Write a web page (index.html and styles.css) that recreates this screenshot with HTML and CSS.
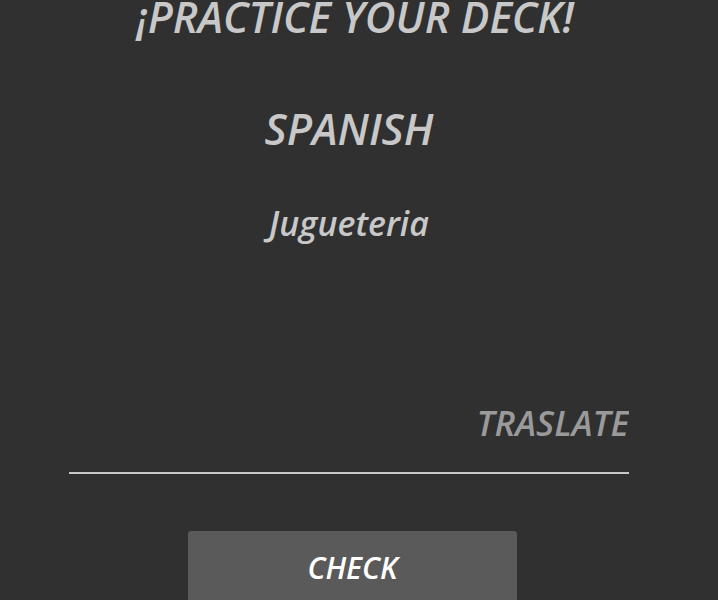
FILE: index.html
```html
<!DOCTYPE html>
<html lang="en">
<head>
<meta charset="utf-8">
<title>Practice your deck</title>
<link rel="stylesheet" href="styles.css">
</head>
<body>
<main class="practice">
  <h1 class="title">¡PRACTICE YOUR DECK!</h1>
  <h2 class="language">SPANISH</h2>
  <p class="word">Jugueteria</p>
  <form class="answer">
    <input class="answer-input" type="text" placeholder="TRASLATE">
    <button class="check" type="button">CHECK</button>
  </form>
</main>
</body>
</html>
```

FILE: styles.css
```css
html, body {
  margin: 0;
  height: 100%;
  background: #303030;
  overflow: hidden;
}
.practice {
  display: flex;
  flex-direction: column;
  align-items: center;
  padding-right: 20px;
  font-family: "Open Sans", "Liberation Sans", sans-serif;
  font-style: italic;
  font-weight: 600;
  color: #c8c8c8;
}
.title {
  margin: 0;
  font-size: 42.5px;
  font-weight: 600;
  line-height: 34px;
  padding-left: 12px;
}
.language {
  margin: 73px 0 0;
  font-size: 43px;
  font-weight: 600;
  line-height: 43px;
}
.word {
  margin: 56px 0 0;
  font-size: 34px;
  line-height: 34px;
}
.answer {
  display: flex;
  flex-direction: column;
  align-items: center;
  width: 560px;
  margin-top: 159px;
}
.answer-input {
  width: 100%;
  box-sizing: border-box;
  background: transparent;
  border: none;
  border-bottom: 2px solid #c8c8c8;
  padding: 0 0 26px;
  margin: 0;
  font-family: inherit;
  font-style: italic;
  font-weight: 600;
  font-size: 35px;
  line-height: normal;
  color: #c8c8c8;
  text-align: right;
  outline: none;
}
.answer-input::placeholder {
  color: #9a9a9a;
}
.check {
  margin-top: 57px;
  margin-left: 7px;
  width: 329px;
  padding: 22px 0 40px;
  background: #5a5a5a;
  border: none;
  border-radius: 3px;
  color: #ffffff;
  font-family: inherit;
  font-style: italic;
  font-weight: 600;
  font-size: 30px;
  line-height: 30px;
}
```
